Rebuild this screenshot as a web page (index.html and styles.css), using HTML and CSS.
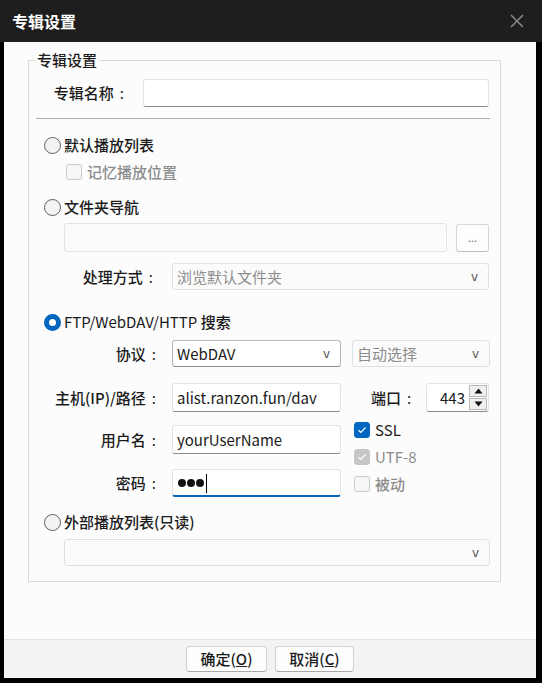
FILE: index.html
```html
<!DOCTYPE html>
<html lang="zh-CN">
<head>
<meta charset="utf-8">
<title>专辑设置</title>
<link rel="stylesheet" href="styles.css">
</head>
<body>
<div class="window">
  <div class="titlebar">
    <span class="title">专辑设置</span>
    <svg class="close" width="14" height="14" viewBox="0 0 14 14"><path d="M1 1 L13 13 M13 1 L1 13" stroke="#8a8a8a" stroke-width="1.5" fill="none"/></svg>
  </div>
  <div class="frame">
    <div class="content">
      <fieldset class="group">
        <legend>专辑设置</legend>
        <div class="row name-row">
          <label class="lbl lbl-name">专辑名称<span class="colon">:</span></label>
          <div class="field w-name"></div>
        </div>
        <div class="sep"></div>

        <div class="radio-row r1"><span class="radio"></span><span>默认播放列表</span></div>
        <div class="check-row c1"><span class="box"></span><span class="muted">记忆播放位置</span></div>

        <div class="radio-row r2"><span class="radio"></span><span>文件夹导航</span></div>
        <div class="row path-row">
          <div class="field disabled w-path"></div>
          <div class="btn-dots">...</div>
        </div>
        <div class="row mode-row">
          <label class="lbl lbl-wide">处理方式<span class="colon">:</span></label>
          <div class="combo disabled w-mode"><span class="muted">浏览默认文件夹</span><span class="chev">v</span></div>
        </div>

        <div class="radio-row r3"><span class="radio on"></span><span class="latin">FTP/WebDAV/HTTP <b class="cjk">搜索</b></span></div>
        <div class="ftp">
          <label class="lbl lbl-wide">协议<span class="colon">:</span></label>
          <div class="combo active"><span>WebDAV</span><span class="chev">v</span></div>
          <div class="combo disabled proto2"><span class="muted">自动选择</span><span class="chev">v</span></div>

          <label class="lbl lbl-wide row2">主机(IP)/路径<span class="colon">:</span></label>
          <div class="field row2"><span>alist.ranzon.fun/dav</span></div>
          <div class="port row2">
            <label class="port-lbl">端口<span class="colon">:</span></label>
            <div class="spin">
              <span class="spin-val">443</span>
              <div class="spin-btns">
                <span class="sb"><svg width="9" height="6" viewBox="0 0 9 6"><path d="M0.5 5.5 L4.5 0.5 L8.5 5.5 Z" fill="#111"/></svg></span>
                <span class="sb"><svg width="9" height="6" viewBox="0 0 9 6"><path d="M0.5 0.5 L4.5 5.5 L8.5 0.5 Z" fill="#111"/></svg></span>
              </div>
            </div>
          </div>

          <label class="lbl lbl-wide row3">用户名<span class="colon">:</span></label>
          <div class="field row3"><span>yourUserName</span></div>
          <div class="checks">
            <div class="check-row"><span class="box checked"><svg width="10" height="8" viewBox="0 0 10 8"><path d="M1.5 4.2 L3.8 6.3 L8.5 1.5" stroke="#fff" stroke-width="1.2" fill="none"/></svg></span><span class="latin">SSL</span></div>
            <div class="check-row"><span class="box checked-dis"><svg width="10" height="8" viewBox="0 0 10 8"><path d="M1.5 4.2 L3.8 6.3 L8.5 1.5" stroke="#fff" stroke-width="1.2" fill="none"/></svg></span><span class="muted latin">UTF-8</span></div>
            <div class="check-row"><span class="box"></span><span class="muted">被动</span></div>
          </div>

          <label class="lbl lbl-wide row4">密码<span class="colon">:</span></label>
          <div class="field focus row4"><span class="dot"></span><span class="dot"></span><span class="dot"></span><span class="caret"></span></div>
        </div>

        <div class="radio-row r4"><span class="radio"></span><span>外部播放列表(只读)</span></div>
        <div class="combo disabled w-ext"><span></span><span class="chev">v</span></div>
      </fieldset>
    </div>
    <div class="footer">
      <button class="btn">确定(<u>O</u>)</button>
      <button class="btn">取消(<u>C</u>)</button>
    </div>
  </div>
</div>
</body>
</html>
```

FILE: styles.css
```css
* { box-sizing: border-box; }
html, body { margin: 0; padding: 0; }
body {
  background: #000;
  width: 542px;
  height: 683px;
  overflow: hidden;
  font-family: "Noto Sans CJK SC", "Noto Sans", sans-serif;
  font-size: 15px;
  font-weight: 500;
  color: #1b1b1b;
}
.latin, .field, .combo, .spin { font-weight: 400; }
.cjk { font-weight: 500; }
.window { display: flex; flex-direction: column; height: 683px; }
.titlebar {
  height: 42px;
  background: #1e1e1e;
  display: flex;
  align-items: center;
  justify-content: space-between;
  padding: 0 18px 0 12px;
}
.title { color: #fff; font-weight: bold; font-size: 16px; line-height: 20px; }
.close { display: block; }
.frame {
  flex: 1;
  display: flex;
  flex-direction: column;
  margin: 0 6px 5px 4px;
  background: #fcfcfc;
}
.content { flex: 1; padding: 10px 0 0 24px; }
.group {
  margin: 0;
  padding: 0 0 15px 0;
  width: 473px;
  border: 1px solid #dadada;
  min-width: 0;
}
.group legend {
  margin-left: 6px;
  padding: 0 2px;
  line-height: 16px;
  font-size: 15px;
}
.row { display: flex; align-items: center; }
.lbl { display: block; text-align: right; line-height: 20px; white-space: nowrap; padding-right: 4px; }
.colon { margin-left: 6px; font-weight: 400; }
.lbl-name { width: 99px; }
.lbl-wide { width: 128px; }
.name-row { margin-top: 11px; gap: 15px; }
.field {
  height: 29px;
  background: #fff;
  border: 1px solid #e3e3e3;
  border-bottom-color: #8b8b8b;
  border-radius: 3px;
  display: flex;
  align-items: center;
  padding: 0 4px;
  line-height: 20px;
  white-space: nowrap;
  overflow: hidden;
}
.w-name { width: 346px; height: 28px; }
.field.disabled { background: #fbfbfb; border-color: #e3e3e3; }
.field.focus { border-bottom: 2px solid #0067c0; padding-top: 1px; }
.sep { margin: 11px 0 0 7px; width: 454px; height: 1px; background: #ababab; }

.radio-row { display: flex; align-items: center; gap: 3px; height: 20px; margin-left: 15px; line-height: 20px; }
.r1 { margin-top: 16px; }
.r2 { margin-top: 15px; }
.r3 { margin-top: 22px; }
.r4 { margin-top: 15px; }
.radio {
  width: 17px; height: 17px;
  border-radius: 50%;
  border: 1px solid #5e5e5e;
  background: #f3f3f3;
  flex: none;
}
.radio.on {
  border: 5px solid #0067c0;
  background: #fff;
}
.check-row { display: flex; align-items: center; gap: 5px; height: 20px; line-height: 20px; }
.c1 { margin: 7px 0 0 37px; }
.box {
  width: 16px; height: 16px;
  border: 1px solid #c9c9c9;
  border-radius: 3px;
  background: #f7f7f7;
  flex: none;
  display: flex; align-items: center; justify-content: center;
}
.box.checked { background: #0067c0; border-color: #0067c0; }
.box.checked-dis { background: #c6c6c6; border-color: #c6c6c6; }
.muted { color: #8c8c8c; }

.path-row { margin: 6px 0 0 35px; gap: 9px; }
.w-path { width: 383px; }
.btn-dots {
  width: 33px; height: 28px;
  border: 1px solid #d6d6d6;
  border-bottom-color: #bdbdbd;
  border-radius: 3px;
  background: #fdfdfd;
  color: #777;
  font-size: 11px;
  font-weight: 400;
  display: flex; align-items: center; justify-content: center;
  padding-bottom: 2px;
}
.mode-row { margin-top: 11px; gap: 15px; }
.combo {
  height: 27px;
  border: 1px solid #e0e0e0;
  border-radius: 3px;
  background: #fbfbfb;
  display: flex;
  align-items: center;
  justify-content: space-between;
  padding: 0 10px 0 4px;
  line-height: 20px;
  white-space: nowrap;
}
.combo.active { background: #fff; border-color: #b9b9b9; border-bottom-color: #8b8b8b; }
.chev { color: #555; font-family: "DejaVu Sans", sans-serif; font-weight: normal; font-size: 12px; line-height: 14px; }
.w-mode { width: 317px; }
.w-ext { width: 426px; margin: 7px 0 0 35px; }

.ftp {
  display: grid;
  grid-template-columns: 131px 169px 138px;
  grid-template-rows: 27px 45px 42px 43px;
  column-gap: 12px;
  margin-top: 8px;
  align-items: center;
}
.ftp .lbl-wide { width: 131px; }
.proto2 { margin-left: -1px; width: 138px; }
.ftp .field { height: 29px; }
.row2 { margin-top: 16px; }
.row3 { margin-top: 13px; }
.row4 { margin-top: 15px; }
.ftp .field.focus { height: 28px; }
.port { display: flex; align-items: center; margin-left: -1px; }
.port-lbl { width: 74px; padding-left: 19px; line-height: 20px; white-space: nowrap; }
.spin {
  width: 63px; height: 29px;
  border: 1px solid #e3e3e3;
  border-bottom-color: #8b8b8b;
  border-radius: 3px;
  background: #fff;
  display: flex;
  align-items: center;
  justify-content: flex-end;
  padding-right: 1px;
}
.spin-val { margin-right: 4px; line-height: 20px; }
.spin-btns { display: flex; flex-direction: column; gap: 1px; }
.sb {
  width: 18px; height: 12px;
  border: 1px solid #b8b8b8;
  background: #f0f0f0;
  display: flex; align-items: center; justify-content: center;
}
.checks {
  grid-row: 3 / span 2;
  grid-column: 3;
  align-self: start;
  display: flex;
  flex-direction: column;
  gap: 7px;
  margin: 8px 0 0 1px;
}
.dot { width: 8px; height: 8px; border-radius: 50%; background: #111; margin-right: 1px; flex: none; }
.field.focus .dot:first-child { margin-left: 1px; }
.caret { width: 1px; height: 19px; background: #000; margin-left: 1px; }

.footer {
  height: 39px;
  border-top: 1px solid #e1e1e1;
  background: #f3f3f3;
  display: flex;
  justify-content: center;
  align-items: flex-start;
  gap: 8px;
  padding-top: 6px;
}
.btn {
  height: 26px;
  min-width: 79px;
  padding: 0 12px;
  font-family: "Noto Sans CJK SC", sans-serif;
  font-size: 15px;
  font-weight: 500;
  color: #1b1b1b;
  background: #fdfdfd;
  border: 1px solid #d0d0d0;
  border-bottom-color: #a8a8a8;
  border-radius: 4px;
  line-height: 20px;
}
.btn:first-child { width: 81px; }
```
